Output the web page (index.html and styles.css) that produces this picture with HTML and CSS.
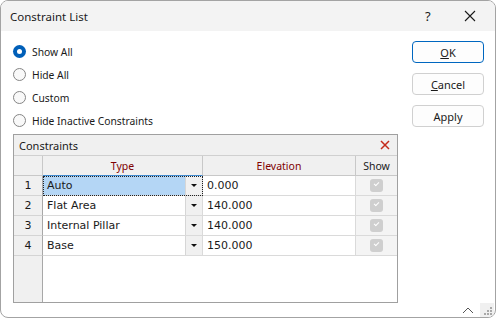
FILE: index.html
```html
<!DOCTYPE html>
<html lang="en">
<head>
  <meta charset="UTF-8">
  <title>Constraint List</title>
  <link rel="stylesheet" href="styles.css">
</head>
<body>
  <div class="window">
    <div class="titlebar">
      <span class="title">Constraint List</span>
      <span class="help">?</span>
      <svg class="close" width="12" height="12" viewBox="0 0 12 12">
        <path d="M1 1 L11 11 M11 1 L1 11" stroke="#1a1a1a" stroke-width="1.1" fill="none"/>
      </svg>
    </div>

    <div class="content">
      <div class="main">
        <div class="radio-row"><span class="radio checked"></span>Show All</div>
        <div class="radio-row"><span class="radio"></span>Hide All</div>
        <div class="radio-row"><span class="radio"></span>Custom</div>
        <div class="radio-row"><span class="radio"></span>Hide Inactive Constraints</div>

        <div class="panel">
          <div class="caption">
            <span>Constraints</span>
            <svg class="caption-x" width="10" height="10" viewBox="0 0 10 10">
              <path d="M1 1 L9 9 M9 1 L1 9" stroke="#c42b1c" stroke-width="1.5" fill="none"/>
            </svg>
          </div>

          <div class="grid-row head">
            <div class="cell num"></div>
            <div class="cell hd type-hd">Type</div>
            <div class="cell hd red">Elevation</div>
            <div class="cell hd">Show</div>
          </div>

          <div class="grid-row">
            <div class="cell num">1</div>
            <div class="cell combo selected"><span class="combo-text">Auto</span><span class="drop"></span></div>
            <div class="cell val">0.000</div>
            <div class="cell show"><span class="check"></span></div>
          </div>
          <div class="grid-row">
            <div class="cell num">2</div>
            <div class="cell combo"><span class="combo-text">Flat Area</span><span class="drop"></span></div>
            <div class="cell val">140.000</div>
            <div class="cell show"><span class="check"></span></div>
          </div>
          <div class="grid-row">
            <div class="cell num">3</div>
            <div class="cell combo"><span class="combo-text">Internal Pillar</span><span class="drop"></span></div>
            <div class="cell val">140.000</div>
            <div class="cell show"><span class="check"></span></div>
          </div>
          <div class="grid-row">
            <div class="cell num">4</div>
            <div class="cell combo"><span class="combo-text">Base</span><span class="drop"></span></div>
            <div class="cell val">150.000</div>
            <div class="cell show"><span class="check"></span></div>
          </div>

          <div class="filler"><div class="filler-num"></div></div>
        </div>
      </div>

      <div class="side">
        <button class="btn default"><u>O</u>K</button>
        <button class="btn"><u>C</u>ancel</button>
        <button class="btn">Apply</button>
      </div>
    </div>

    <div class="statusbar">
      <svg class="chevron" width="12" height="7" viewBox="0 0 12 7">
        <path d="M1 6 L6 1 L11 6" stroke="#555" stroke-width="1" fill="none"/>
      </svg>
      <svg class="grip" width="14" height="14" viewBox="0 0 14 14">
        <rect x="10" y="4" width="2" height="2" fill="#a8a8a8"/>
        <rect x="7" y="7" width="2" height="2" fill="#a8a8a8"/>
        <rect x="10" y="7" width="2" height="2" fill="#a8a8a8"/>
        <rect x="4" y="10" width="2" height="2" fill="#a8a8a8"/>
        <rect x="7" y="10" width="2" height="2" fill="#a8a8a8"/>
        <rect x="10" y="10" width="2" height="2" fill="#a8a8a8"/>
      </svg>
    </div>
  </div>
</body>
</html>
```

FILE: styles.css
```css
body {
  margin: 0;
  background: #fff;
  font-family: "Noto Sans", sans-serif;
  color: #1a1a1a;
}

.window {
  width: 496px;
  height: 318px;
  box-sizing: border-box;
  border: 1px solid #a3a3a3;
  border-radius: 8px;
  overflow: hidden;
  background: #fff;
  display: flex;
  flex-direction: column;
}

.titlebar {
  height: 30px;
  background: #f3f3f3;
  display: flex;
  align-items: center;
  padding-left: 9px;
  flex-shrink: 0;
}

.title {
  font-size: 11.5px;
  flex: 1;
}

.help {
  font-size: 13px;
  width: 12px;
  margin-right: 27px;
}

.close {
  margin-right: 19px;
}

.content {
  display: flex;
  flex: 1;
}

.main {
  flex: 1;
  padding: 9px 0 0 12px;
}

/* radio buttons */
.radio-row {
  height: 23px;
  display: flex;
  align-items: center;
  font-size: 10.3px;
}

.radio {
  width: 13px;
  height: 13px;
  box-sizing: border-box;
  border: 1px solid #858585;
  border-radius: 50%;
  background: #f9f9f9;
  margin-right: 6px;
  position: relative;
}

.radio.checked {
  border: none;
  background: #005fb8;
}

.radio.checked::after {
  content: "";
  position: absolute;
  left: 4px;
  top: 4px;
  width: 5px;
  height: 5px;
  border-radius: 50%;
  background: #fff;
}

/* constraints panel */
.panel {
  margin-top: 2px;
  width: 385px;
  height: 169px;
  box-sizing: border-box;
  border: 1px solid #a0a0a0;
  display: flex;
  flex-direction: column;
}

.caption {
  height: 21px;
  box-sizing: border-box;
  background: #f0f0f0;
  border-bottom: 1px solid #d0d0d0;
  display: flex;
  align-items: center;
  justify-content: space-between;
  padding: 0 7px 0 5px;
  font-size: 11px;
}

.grid-row {
  display: grid;
  grid-template-columns: 29px 160px 153px 1fr;
  height: 20px;
  font-family: "DejaVu Sans", sans-serif;
  font-size: 11px;
}

.cell {
  box-sizing: border-box;
  border-right: 1px solid #dadada;
  border-bottom: 1px solid #dadada;
  display: flex;
  align-items: center;
}

.cell:last-child {
  border-right: none;
}

.head .cell {
  background: #f0f0f0;
  border-color: #c8c8c8;
}

.hd {
  justify-content: center;
  font-family: "Noto Sans", sans-serif;
  font-size: 10.5px;
}

.red {
  color: #800000;
}

.type-hd {
  color: #800000;
  border-bottom: 1px solid #3f8ad0 !important;
}

.num {
  background: #f0f0f0;
  justify-content: center;
  border-right-color: #a8a8a8;
  border-bottom-color: #d4d4d4;
}

.combo {
  padding-left: 4px;
  position: relative;
}

.combo-text {
  flex: 1;
}

.combo.selected {
  background: #b4d6f5;
  outline: 1px dotted #222;
  outline-offset: -1px;
}

.drop {
  width: 17px;
  height: 19px;
  box-sizing: border-box;
  background: #f0f0f0;
  border-left: 1px solid #d6d6d6;
  display: flex;
  align-items: center;
  justify-content: center;
}

.drop::after {
  content: "";
  border-left: 3px solid transparent;
  border-right: 3px solid transparent;
  border-top: 3px solid #111;
}

.val {
  padding-left: 4px;
}

.show {
  background: #f4f4f4;
  justify-content: center;
}

.check {
  width: 13px;
  height: 13px;
  border-radius: 3px;
  background: #cfcfcf;
  position: relative;
}

.check::after {
  content: "";
  position: absolute;
  left: 4px;
  top: 3px;
  width: 4px;
  height: 2px;
  border-left: 1px solid #fff;
  border-bottom: 1px solid #fff;
  transform: rotate(-45deg);
}

.filler {
  flex: 1;
  display: flex;
}

.filler-num {
  width: 29px;
  box-sizing: border-box;
  background: #f0f0f0;
  border-right: 1px solid #a8a8a8;
}

/* side buttons */
.side {
  width: 72px;
  margin-right: 11px;
  padding-top: 10px;
  display: flex;
  flex-direction: column;
  gap: 10px;
}

.btn {
  height: 22px;
  width: 72px;
  border: 1px solid #d0d0d0;
  border-radius: 4px;
  background: #fdfdfd;
  font-family: "Noto Sans", sans-serif;
  font-size: 11px;
  color: #1a1a1a;
  padding: 0;
}

.btn.default {
  border-color: #0067c0;
}

.statusbar {
  height: 14px;
  display: flex;
  justify-content: flex-end;
  align-items: center;
  flex-shrink: 0;
}

.chevron {
  margin-right: 6px;
}

.grip {
  background: #f0f0f0;
  margin-right: 1px;
}
```
